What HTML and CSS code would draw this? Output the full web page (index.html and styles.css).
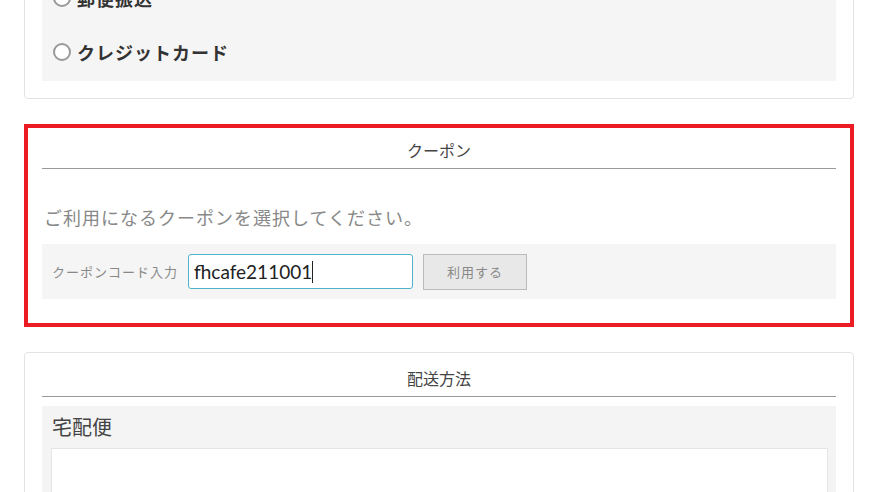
FILE: index.html
```html
<!DOCTYPE html>
<html lang="ja">
<head>
    <meta charset="utf-8">
    <meta name="viewport" content="width=device-width, initial-scale=1.0">
    <title>ご注文手続き</title>
    <link rel="stylesheet" href="styles.css">
</head>
<body>
    <div class="page">
        <div class="card card-payment">
            <div class="choices">
                <label class="choice"><span class="radio"></span>郵便振込</label>
                <label class="choice"><span class="radio"></span>クレジットカード</label>
            </div>
        </div>

        <div class="card card-coupon">
            <h3 class="card-title">クーポン</h3>
            <p class="coupon-note">ご利用になるクーポンを選択してください。</p>
            <div class="coupon-row">
                <span class="coupon-label">クーポンコード入力</span>
                <div class="coupon-input">fhcafe211001<span class="caret"></span></div>
                <button class="coupon-btn">利用する</button>
            </div>
        </div>

        <div class="card card-delivery">
            <h3 class="card-title">配送方法</h3>
            <div class="delivery-box">
                <div class="delivery-name">宅配便</div>
                <div class="delivery-inner"></div>
            </div>
        </div>
    </div>
</body>
</html>
```

FILE: styles.css
```css
body {
    margin: 0;
    background-color: white;
    font-family: Lato, "Noto Sans CJK JP", sans-serif;
    color: #555;
    overflow: hidden;
}
.page {
    margin: 0 22px 0 24px;
}
.card {
    border: 1px solid #e3e3e3;
    border-radius: 4px;
    padding: 17px;
    background-color: white;
}
.card-payment {
    margin-top: -57px;
    margin-bottom: 25px;
}
.choices {
    background-color: #f5f5f5;
    padding: 10px 11px 2px 11px;
}
.choice {
    display: flex;
    align-items: center;
    height: 54px;
    font-size: 18px;
    font-weight: bold;
    letter-spacing: 1px;
    color: #333;
}
.radio {
    width: 14px;
    height: 14px;
    border: 2px solid #999;
    border-radius: 50%;
    background-color: white;
    margin-right: 6px;
}
.card-coupon {
    border: 4px solid #ec1c24;
    border-radius: 0;
    padding: 14px 14px 24px 14px;
    margin-bottom: 25px;
}
.card-title {
    margin: 0;
    padding-bottom: 8px;
    border-bottom: 1px solid #999;
    text-align: center;
    font-size: 16px;
    line-height: 18px;
    font-weight: normal;
    color: #444;
}
.coupon-note {
    margin: 37px 0 14px 2px;
    font-size: 18px;
    line-height: 24px;
    letter-spacing: 1px;
    color: #888;
}
.coupon-row {
    display: flex;
    align-items: center;
    gap: 10px;
    height: 55px;
    padding: 0 10px;
    background-color: #f5f5f5;
}
.coupon-label {
    font-size: 13px;
    letter-spacing: 1px;
    color: #888;
}
.coupon-input {
    box-sizing: border-box;
    display: flex;
    align-items: center;
    width: 225px;
    height: 35px;
    padding: 0 6px 0 5px;
    border: 1px solid #4fb3cc;
    border-radius: 3px;
    background-color: white;
    font-size: 19px;
    color: #222;
}
.caret {
    display: inline-block;
    width: 1px;
    height: 22px;
    background-color: #222;
}
.coupon-btn {
    box-sizing: border-box;
    width: 104px;
    height: 36px;
    border: 1px solid #bbb;
    border-radius: 0;
    background-color: #e8e8e8;
    font-family: Lato, "Noto Sans CJK JP", sans-serif;
    font-size: 13px;
    letter-spacing: 1px;
    color: #888;
}
.delivery-box {
    margin-top: 9px;
    padding: 8px 8px 0 9px;
    background-color: #f4f4f4;
}
.delivery-name {
    padding-left: 1px;
    font-size: 20px;
    line-height: 26px;
    color: #444;
}
.delivery-inner {
    margin-top: 8px;
    height: 120px;
    border: 1px solid #e5e5e5;
    background-color: white;
}
```
